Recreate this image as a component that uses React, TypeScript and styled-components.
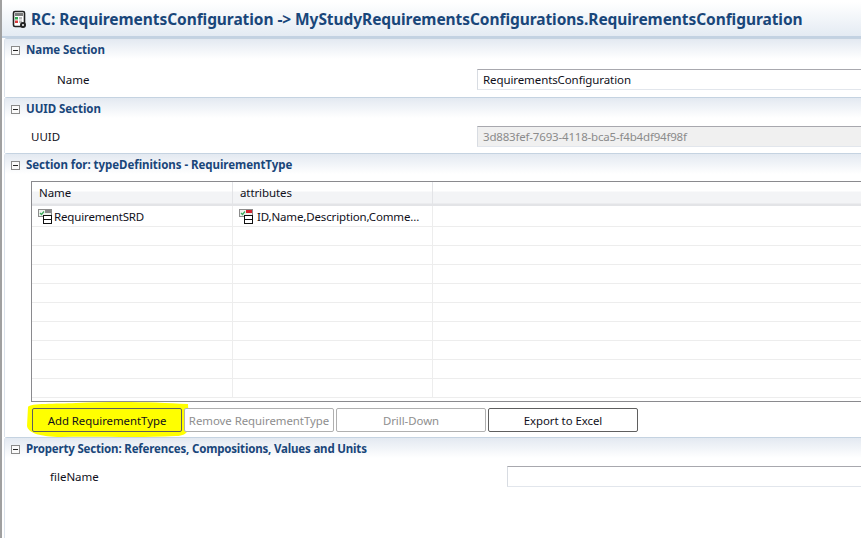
import React from "react";
import styled, { createGlobalStyle } from "styled-components";

const GlobalStyle = createGlobalStyle`
    html, body {
        margin: 0;
        padding: 0;
        background: #ffffff;
        overflow: hidden;
    }
    * {
        box-sizing: border-box;
    }
`;

const Page = styled.div`
    width: 861px;
    height: 538px;
    overflow: hidden;
    background: #ffffff;
    border-left: 2px solid #a0a0a0;
    font-family: "Noto Sans", "Open Sans", sans-serif;
    font-size: 11.5px;
    color: #10101a;
`;

const TitleBar = styled.div`
    height: 34px;
    margin-top: 2px;
    display: flex;
    align-items: center;
    gap: 4px;
    padding-left: 10px;
    background: linear-gradient(#ffffff, #e4ebf3);
    border-bottom: 2px solid #c3d2e2;
    box-sizing: content-box;
    white-space: nowrap;
`;

const TitleText = styled.span`
    font-size: 15.5px;
    font-weight: 700;
    letter-spacing: -0.07px;
    color: #19467a;
`;

const Section = styled.section<{ $height: number }>`
    height: ${(p) => p.$height}px;
    border-top: 1px solid #c5d3e1;
    border-left: 1px solid #dce3ec;
    border-top-left-radius: 3px;
    margin-left: 2px;
`;

const SectionHeader = styled.div`
    height: 20px;
    display: flex;
    align-items: center;
    gap: 6px;
    padding-left: 6px;
    background: linear-gradient(#e3e9f1, #ffffff);
    white-space: nowrap;
`;

const Toggle = styled.span`
    width: 9px;
    height: 9px;
    flex: none;
    margin-top: 2px;
    border: 1px solid #8a8a8a;
    background: #fafafa;
    display: flex;
    align-items: center;
    justify-content: center;
    &::before {
        content: "";
        width: 5px;
        height: 1px;
        background: #222222;
    }
`;

const SectionTitle = styled.span<{ $tight?: boolean }>`
    font-size: 11.5px;
    font-weight: 700;
    letter-spacing: ${(p) => (p.$tight ? "-0.18px" : "-0.05px")};
    color: #19467a;
`;

const FieldRow = styled.div<{ $labelWidth: number; $top: number }>`
    display: grid;
    grid-template-columns: ${(p) => p.$labelWidth}px 1fr;
    align-items: center;
    height: 20px;
    margin-top: ${(p) => p.$top}px;
`;

const FieldLabel = styled.label<{ $inset: number }>`
    padding-left: ${(p) => p.$inset}px;
`;

const FieldBox = styled.div<{ $disabled?: boolean }>`
    height: 21px;
    margin-right: -8px;
    padding-left: 5px;
    display: flex;
    align-items: center;
    border: 1px solid #e2e6ec;
    border-top: 1px solid #a8a8ae;
    border-left-color: #d8dce2;
    background: ${(p) => (p.$disabled ? "#f0f0f0" : "#ffffff")};
    color: ${(p) => (p.$disabled ? "#8b8b8b" : "#10101a")};
    letter-spacing: ${(p) => (p.$disabled ? "-0.18px" : "-0.1px")};
`;

const TableFrame = styled.div`
    margin: 7px -4px 0 26px;
    height: 221px;
    border: 1px solid #8a8a8e;
    border-right: none;
    overflow: hidden;
`;

const HeaderRow = styled.div`
    height: 24px;
    display: grid;
    grid-template-columns: 201px 200px 1fr;
    background: linear-gradient(#ffffff 0, #ffffff 9px, #f3f4f6 10px, #f3f4f6 21px, #e3e4e7 22px);
`;

const HeaderCell = styled.div`
    padding: 3px 0 0 7px;
    letter-spacing: -0.1px;
    border-right: 1px solid #e3e4e7;
    &:last-child {
        border-right: none;
    }
`;

const BodyRow = styled.div<{ $first?: boolean }>`
    height: ${(p) => (p.$first ? 21 : 19)}px;
    display: grid;
    grid-template-columns: 201px 200px 1fr;
    border-bottom: 1px solid #ededed;
`;

const BodyCell = styled.div<{ $gap?: number }>`
    display: flex;
    align-items: center;
    gap: ${(p) => p.$gap ?? 0}px;
    padding-left: 6px;
    letter-spacing: -0.15px;
    border-right: 1px solid #ededed;
    white-space: nowrap;
    &:last-child {
        border-right: none;
    }
`;

const ButtonBar = styled.div`
    display: flex;
    gap: 2px;
    margin: 6px 0 0 27px;
`;

const ButtonSlot = styled.div`
    position: relative;
`;

const Highlight = styled.svg`
    position: absolute;
    left: -6px;
    top: -7px;
    width: 163px;
    height: 37px;
`;

const ActionButton = styled.button<{ $state?: "normal" | "marked" | "disabled" }>`
    position: relative;
    display: block;
    width: 150px;
    height: 24px;
    padding: 0;
    border-radius: 2px;
    font-family: inherit;
    font-size: 11.4px;
    letter-spacing: -0.03px;
    white-space: nowrap;
    overflow: hidden;
    border: 1px solid ${(p) => (p.$state === "disabled" ? "#b0b0b0" : "#5f5f5f")};
    background: ${(p) => (p.$state === "marked" ? "transparent" : "#ffffff")};
    color: ${(p) => (p.$state === "disabled" ? "#8e8e8e" : "#10101a")};
`;

const ConfigIcon = () => (
    <svg width="15" height="19" viewBox="0 0 15 19">
        <rect x="1.5" y="1.5" width="11" height="15" rx="1.5" fill="#ffffff" stroke="#222222" strokeWidth="1.6" />
        <rect x="3" y="3" width="8" height="3" fill="#7b7b7b" />
        <rect x="3" y="7" width="3" height="2.5" fill="#2fa84f" />
        <rect x="7" y="7" width="3" height="2.5" fill="#b9b9b9" />
        <rect x="3" y="10.5" width="3" height="2.5" fill="#d93a3a" />
        <rect x="7" y="10.5" width="3" height="2.5" fill="#b9b9b9" />
        <circle cx="11" cy="15" r="3" fill="#222222" />
        <circle cx="11" cy="15" r="1" fill="#ffffff" />
    </svg>
);

const TypeIcon = ({ accent }: { accent: string }) => (
    <svg width="15" height="15" viewBox="0 0 15 15">
        <rect x="0.5" y="0.5" width="13" height="7" fill="#eef2ee" stroke="#8c8c8c" />
        <path d="M2 4l1.5 1.5L6 2.5" fill="none" stroke="#39a85a" strokeWidth="1.2" />
        <rect x="7" y="1" width="6" height="3" fill={accent} />
        <rect x="5.5" y="6.5" width="8" height="8" fill="#ffffff" stroke="#111111" />
        <path d="M5.5 10.5h8" stroke="#111111" />
    </svg>
);

const rowCount = 9;

export default function App() {
    return (
        <>
            <GlobalStyle />
            <Page>
                <TitleBar>
                    <ConfigIcon />
                    <TitleText>RC: RequirementsConfiguration -&gt; MyStudyRequirementsConfigurations.RequirementsConfiguration</TitleText>
                </TitleBar>

                <Section $height={59}>
                    <SectionHeader>
                        <Toggle />
                        <SectionTitle>Name Section</SectionTitle>
                    </SectionHeader>
                    <FieldRow $labelWidth={472} $top={10}>
                        <FieldLabel $inset={52}>Name</FieldLabel>
                        <FieldBox>RequirementsConfiguration</FieldBox>
                    </FieldRow>
                </Section>

                <Section $height={56}>
                    <SectionHeader>
                        <Toggle />
                        <SectionTitle>UUID Section</SectionTitle>
                    </SectionHeader>
                    <FieldRow $labelWidth={472} $top={8}>
                        <FieldLabel $inset={26}>UUID</FieldLabel>
                        <FieldBox $disabled>3d883fef-7693-4118-bca5-f4b4df94f98f</FieldBox>
                    </FieldRow>
                </Section>

                <Section $height={284}>
                    <SectionHeader>
                        <Toggle />
                        <SectionTitle>Section for: typeDefinitions - RequirementType</SectionTitle>
                    </SectionHeader>
                    <TableFrame>
                        <HeaderRow>
                            <HeaderCell>Name</HeaderCell>
                            <HeaderCell>attributes</HeaderCell>
                            <HeaderCell />
                        </HeaderRow>
                        <BodyRow $first>
                            <BodyCell $gap={1}>
                                <TypeIcon accent="#8a8a8a" />
                                RequirementSRD
                            </BodyCell>
                            <BodyCell $gap={3}>
                                <TypeIcon accent="#d3232e" />
                                ID,Name,Description,Comme...
                            </BodyCell>
                            <BodyCell />
                        </BodyRow>
                        {Array.from({ length: rowCount }, (_, i) => (
                            <BodyRow key={i}>
                                <BodyCell />
                                <BodyCell />
                                <BodyCell />
                            </BodyRow>
                        ))}
                    </TableFrame>
                    <ButtonBar>
                        <ButtonSlot>
                            <Highlight viewBox="0 0 163 37">
                                <path
                                    d="M2 6C4 2 30 3 50 2C90 0 130 1 162 3L163 28C160 33 157 35 150 35C110 37 70 35 35 36C15 36 2 32 1 25Z"
                                    fill="#ffff00"
                                />
                            </Highlight>
                            <ActionButton $state="marked">Add RequirementType</ActionButton>
                        </ButtonSlot>
                        <ButtonSlot>
                            <ActionButton $state="disabled" disabled>Remove RequirementType</ActionButton>
                        </ButtonSlot>
                        <ButtonSlot>
                            <ActionButton $state="disabled" disabled>Drill-Down</ActionButton>
                        </ButtonSlot>
                        <ButtonSlot>
                            <ActionButton>Export to Excel</ActionButton>
                        </ButtonSlot>
                    </ButtonBar>
                </Section>

                <Section $height={101}>
                    <SectionHeader>
                        <Toggle />
                        <SectionTitle $tight>Property Section: References, Compositions, Values and Units</SectionTitle>
                    </SectionHeader>
                    <FieldRow $labelWidth={502} $top={8}>
                        <FieldLabel $inset={45}>fileName</FieldLabel>
                        <FieldBox />
                    </FieldRow>
                </Section>
            </Page>
        </>
    );
}
